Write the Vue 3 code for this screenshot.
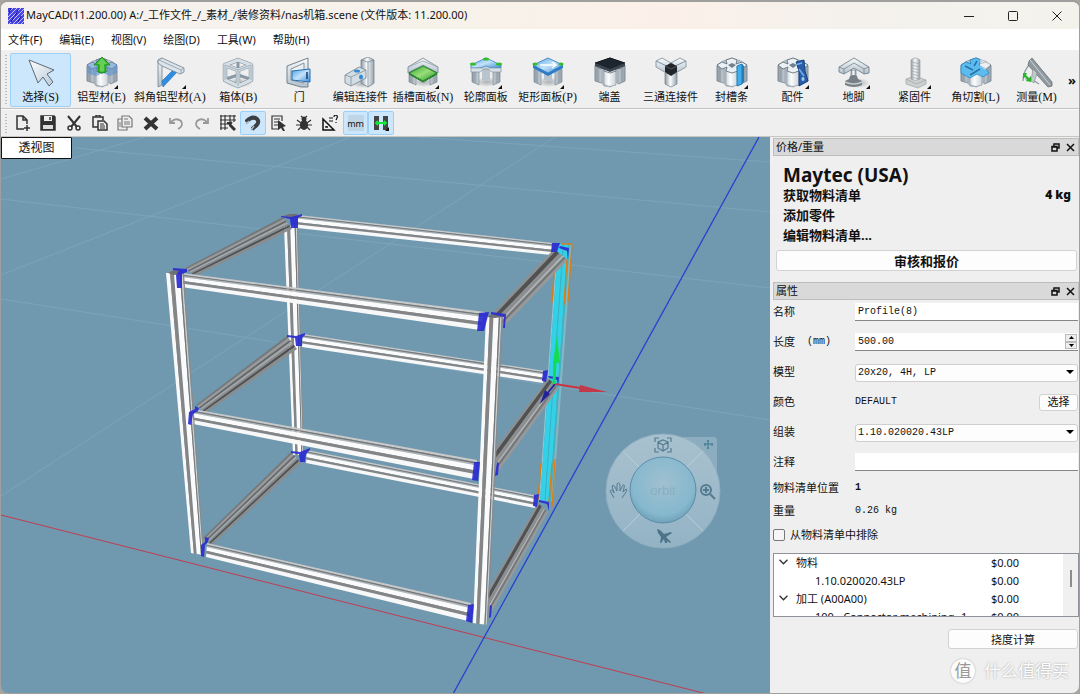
<script setup>
import { ref } from 'vue'

const menus = ['文件(F)', '编辑(E)', '视图(V)', '绘图(D)', '工具(W)', '帮助(H)']

const tools = [
  { id: 'select', zh: '选择', key: '(S)', active: true },
  { id: 'profile', zh: '铝型材', key: '(E)', drop: true },
  { id: 'miter', zh: '斜角铝型材', key: '(A)', drop: true },
  { id: 'box', zh: '箱体', key: '(B)' },
  { id: 'door', zh: '门' },
  { id: 'connector', zh: '编辑连接件' },
  { id: 'slotPanel', zh: '插槽面板', key: '(N)', drop: true },
  { id: 'outlinePanel', zh: '轮廓面板', drop: true },
  { id: 'rectPanel', zh: '矩形面板', key: '(P)', drop: true },
  { id: 'cap', zh: '端盖' },
  { id: 'threeWay', zh: '三通连接件' },
  { id: 'strip', zh: '封槽条', drop: true },
  { id: 'parts', zh: '配件', drop: true },
  { id: 'foot', zh: '地脚', drop: true },
  { id: 'fastener', zh: '紧固件', drop: true },
  { id: 'cut', zh: '角切割', key: '(L)' },
  { id: 'measure', zh: '测量', key: '(M)' },
]

const actions = [
  { id: 'new', label: '新建' },
  { id: 'save', label: '保存' },
  { id: 'cutout', label: '剪切' },
  { id: 'paste', label: '粘贴' },
  { id: 'copy', label: '复制' },
  { id: 'delete', label: '删除' },
  { id: 'undo', label: '撤销' },
  { id: 'redo', label: '重做' },
  { id: 'grid', label: '网格' },
  { id: 'snap', label: '吸附', active: true },
  { id: 'list', label: '清单' },
  { id: 'bug', label: '调试' },
  { id: 'angle', label: '角度' },
  { id: 'mm', label: '单位', active: true },
  { id: 'gap', label: '间距', active: true },
]

const name = ref('Profile(8)')
const length = ref('500.00')
const model = ref('20x20, 4H, LP')
const assembly = ref('1.10.020020.43LP')
const note = ref('')
const excluded = ref(false)

const tree = [
  { text: '物料', price: '$0.00', parent: true },
  { text: '1.10.020020.43LP', price: '$0.00' },
  { text: '加工 (A00A00)', price: '$0.00', parent: true },
  { text: '100 - Connector machining', qty: '1', price: '$0.00' },
]

const light = [
  [0, 0.12, '#c9c9c9'], [0.12, 0.2, '#777'], [0.2, 0.28, '#b5b5b5'],
  [0.28, 0.56, '#fbfbfb'], [0.56, 0.74, '#858585'], [0.74, 1, '#f8f8f8'],
]
const post = [
  [0, 0.22, '#f9f9f9'], [0.22, 0.44, '#858585'], [0.44, 0.76, '#fbfbfb'],
  [0.76, 0.84, '#777'], [0.84, 0.92, '#d0d0d0'], [0.92, 1, '#8b8b8b'],
]
const dark = [
  [0, 0.14, '#777'], [0.14, 0.3, '#9a9a9a'], [0.3, 0.42, '#666'], [0.42, 0.56, '#a6a6a6'],
  [0.56, 0.68, '#8a8a8a'], [0.68, 0.82, '#505050'], [0.82, 1, '#8c8c8c'],
]
const dark2 = [
  [0, 0.14, '#8f8f8f'], [0.14, 0.38, '#515151'], [0.38, 0.6, '#8e8e8e'],
  [0.6, 0.7, '#b5b5b5'], [0.7, 0.84, '#777'], [0.84, 1, '#999'],
]
const cyan = [
  [0, 0.08, '#8fc9d6'], [0.08, 0.4, '#32d1e8'], [0.4, 0.46, '#2bb9d0'], [0.46, 0.74, '#32d1e8'],
  [0.74, 0.86, '#3fb4c8'], [0.86, 1, '#7fb9c2'],
]

function stripes([x1, y1, x2, y2, x3, y3, x4, y4], set) {
  const mix = (a, b, t) => (a + (b - a) * t).toFixed(1)
  return set.map(([s, e, fill]) => ({
    fill,
    points: [
      [mix(x1, x2, s), mix(y1, y2, s)], [mix(x3, x4, s), mix(y3, y4, s)],
      [mix(x3, x4, e), mix(y3, y4, e)], [mix(x1, x2, e), mix(y1, y2, e)],
    ].join(' '),
  }))
}

const beams = [
  { at: [284, 226, 298, 225, 293, 455, 304, 455], set: post },
  { at: [298, 215, 297, 228, 553, 243, 551, 255], set: light },
  { at: [303, 334, 302, 347, 545, 371, 543, 383], set: light },
  { at: [307, 450, 306, 463, 538, 496, 535, 508], set: light },
  { at: [557, 244, 572, 244, 539, 500, 553, 502], set: cyan },
  { at: [283, 217, 292, 229, 185, 268, 195, 276], set: dark },
  { at: [287, 336, 297, 349, 196, 405, 206, 413], set: dark },
  { at: [291, 452, 301, 463, 203, 538, 212, 545], set: dark },
  { at: [554, 249, 568, 260, 494, 312, 504, 326], set: dark2 },
  { at: [548, 378, 559, 388, 495, 449, 497, 473], set: dark2 },
  { at: [538, 503, 548, 512, 487, 592, 491, 613], set: dark2 },
  { at: [182, 273, 181, 287, 485, 312, 480, 330], set: light },
  { at: [193, 409, 193, 424, 477, 460, 474, 479], set: light },
  { at: [207, 543, 206, 557, 471, 603, 468, 621], set: light },
  { at: [166, 273, 184, 273, 191, 553, 204, 555], set: post },
  { at: [486, 316, 503, 316, 473, 623, 488, 625], set: post },
].flatMap((b) => stripes(b.at, b.set))

const caps = [
  '283,216 289,214 297,214 297,217 290,218',
  '168,273 174,270 182,271 182,274 174,275',
  '487,317 493,313 503,314 502,317 495,318',
]

const corners = [
  '281,216 291,217 302,214 302,216 298,218 298,228 291,228 290,219 281,217',
  '173,268 187,269 187,272 182,274 182,288 177,288 176,275 179,271 173,270',
  '479,313 489,312 484,331 477,331',
  '491,312 506,314 505,328 503,328 504,317 491,314',
  '552,243 560,243 557,252 551,252',
  '560,246 569,248 568,260 567,251 559,248',
  '287,335 296,336 305,333 305,335 302,338 302,346 296,346 295,338 287,337',
  '195,406 199,408 198,411 193,414 191,425 188,424 189,412 195,409',
  '543,371 548,370 546,382 542,381',
  '548,376 559,377 558,387 557,380 549,378',
  '291,451 300,452 310,448 310,450 306,454 305,462 300,462 299,454 291,453',
  '205,537 209,538 208,542 205,545 204,557 201,556 201,545 205,542',
  '474,462 480,462 478,481 472,480',
  '497,462 499,463 498,475 495,476',
  '534,495 539,494 537,507 533,506',
  '539,500 549,502 549,511 547,504 539,502',
  '468,605 474,604 472,623 466,621',
  '490,605 492,606 491,617 489,618',
]

const gridLines = [
  [145, 137, 1, 179], [351, 137, 1, 275], [555, 137, 1, 496], [75, 148, 770, 212],
  [418, 137, 770, 162], [1, 199, 770, 288], [1, 299, 770, 420],
]
</script>

<template>
  <main class="window">
    <header class="titlebar">
      <svg class="logo" viewBox="0 0 16 16" aria-hidden="true">
        <rect width="16" height="16" fill="#4746e4" />
        <path d="M0 5 5 0M0 9 9 0M0 13 13 0M1 16 16 1M5 16 16 5M9 16 16 9M13 16 16 13" stroke="#c3c2fc" stroke-width="1" />
        <path d="M3 0 1 5M10 2 7 8M13 8 10 14M6 9 3 14" stroke="#1412a8" stroke-width="1" />
      </svg>
      <h1>MayCAD(11.200.00) A:/_工作文件_/_素材_/装修资料/nas机箱.scene (文件版本: 11.200.00)</h1>
      <div class="controls">
        <button aria-label="最小化"><svg viewBox="0 0 10 10"><path d="M0 5.5h10" /></svg></button>
        <button aria-label="最大化"><svg viewBox="0 0 10 10"><rect x=".5" y=".5" width="9" height="9" rx="1" /></svg></button>
        <button aria-label="关闭"><svg viewBox="0 0 10 10"><path d="M.5.5l9 9M9.500.5l-9 9" /></svg></button>
      </div>
    </header>

    <nav class="menu">
      <button v-for="m in menus" :key="m">{{ m }}</button>
    </nav>

    <svg class="defs" aria-hidden="true">
      <defs>
        <linearGradient id="steel"><stop offset="0" stop-color="#8d99a3" /><stop offset=".45" stop-color="#fafcfd" /><stop offset="1" stop-color="#94a0aa" /></linearGradient>
        <linearGradient id="pale" x2="0" y2="1"><stop offset="0" stop-color="#f7fafc" /><stop offset="1" stop-color="#b4c1cb" /></linearGradient>
        <linearGradient id="sky" x2="1" y2="1"><stop offset="0" stop-color="#4f9ee0" /><stop offset=".5" stop-color="#c2e2fa" /><stop offset="1" stop-color="#3c8cd6" /></linearGradient>
        <linearGradient id="leaf" x2="1" y2="1"><stop offset="0" stop-color="#2fa32c" /><stop offset=".5" stop-color="#9ade7c" /><stop offset="1" stop-color="#1e9120" /></linearGradient>
        <linearGradient id="cursor" x2="1" y2="1"><stop offset="0" stop-color="#fff" /><stop offset="1" stop-color="#b9c9d8" /></linearGradient>
        <radialGradient id="shade"><stop offset="0" stop-color="#7d8790" stop-opacity=".6" /><stop offset="1" stop-color="#7d8790" stop-opacity="0" /></radialGradient>
        <g id="legs">
          <ellipse cx="17" cy="25" rx="13" ry="5" fill="url(#shade)" />
          <path d="M12 12h8v11h-8z" fill="#b9c4cd" />
          <path d="M2 12h7v16l-7-3zM23 12h7v13l-7 3z" fill="url(#steel)" stroke="#7d8c98" stroke-width=".7" />
          <path d="M5 14V26M27 14V26" stroke="#8b98a3" stroke-width=".7" />
        </g>
        <g id="extrusion">
          <path d="M1 8 7 4 16 1 25 4 31 8V24L25 27 22 25 17 30 10 29 8 26 1 24z" fill="#b9c6cf" stroke="#8996a1" stroke-width=".6" />
          <path d="M1 9 8 11V26L1 24zM24 11 31 9V24L24 27zM10 13q6 3 12 0V28q-6 3-12 0z" fill="url(#steel)" stroke="#7d8c98" stroke-width=".6" />
          <path d="M4 10V25M28 10V25" stroke="#7d8c98" stroke-width=".6" />
          <path d="M1 8 6 5 11 7 10 3 16 1 21 3 20 7 26 5 31 8 26 12 21 10 22 14 16 16 10 14 11 10 6 12z" fill="#eaf0f3" stroke="#596975" stroke-width=".8" />
          <path d="M12 8 16 6 20 8 16 11z" fill="#71808c" />
        </g>
      </defs>
    </svg>

    <div class="toolbar" role="toolbar" aria-label="绘图工具">
      <span class="grip"></span>
      <button v-for="t in tools" :key="t.id" class="tool" :class="{ active: t.active }">
        <svg viewBox="0 0 32 32" aria-hidden="true">
          <path v-if="t.id === 'select'" d="M4 3 29 13 22 17 28 25 24 29 18 20 13 26z" fill="url(#cursor)" stroke="#5d6a76" stroke-width="1" />
          <g v-else-if="t.id === 'profile'">
            <use href="#extrusion" />
            <path d="M1 8 6 5 11 7 10 3 16 1 21 3 20 7 26 5 31 8 31 16 24 19 17 16 10 19 1 16z" fill="#5b93cf" opacity=".6" />
            <path d="M16 0 24 8H20V15Q16 17 12 15V8H8z" fill="#35b62c" stroke="#168517" stroke-width=".8" />
            <path d="M16 1 21 7H18V14Q16 15 14 14V7H11z" fill="#7fd968" opacity=".7" />
          </g>
          <g v-else-if="t.id === 'miter'">
            <path d="M4 3 8 1V28L4 30z" fill="url(#pale)" stroke="#738390" stroke-width=".8" />
            <path d="M8 24 21 11 24 14 9 30z" fill="#2f8ee0" stroke="#2069b0" stroke-width=".6" />
            <path d="M4 3 8 1 30 11V15L26 17 8 9 4 6z" fill="#dbe4ea" stroke="#738390" stroke-width=".8" />
            <path d="M5 3 27 13 30 11M27 13V17" fill="none" stroke="#8b99a4" stroke-width=".8" />
          </g>
          <g v-else-if="t.id === 'box'" fill="none" stroke-linejoin="round">
            <ellipse cx="17" cy="26" rx="14" ry="5" fill="url(#shade)" />
            <path d="M16 4V18M4 22 16 18 28 22" stroke="#8999a5" stroke-width="3" />
            <path d="M3 8 16 3 29 8 16 13zM3 8V23L16 29 29 23V8M16 13V29" stroke="#84949f" stroke-width="4.500" />
            <path d="M3 8 16 3 29 8 16 13zM3 8V23L16 29 29 23V8M16 13V29" stroke="#d5dfe5" stroke-width="3.200" />
            <path d="M3 8 16 13 29 8M16 13V29M3 8V23M29 8V23" stroke="#97a6b0" stroke-width=".8" />
          </g>
          <g v-else-if="t.id === 'door'">
            <path d="M4 9 25 1V30H18L4 26z" fill="url(#pale)" stroke="#738390" />
            <path d="M8 12 21 6V26L8 23z" fill="#e9f1f5" stroke="#8493a0" />
            <path d="M9 14 27 12V25L9 23z" fill="url(#sky)" stroke="#276fb0" />
            <path d="M24 15v7" stroke="#173b66" stroke-width="1.500" />
          </g>
          <g v-else-if="t.id === 'connector'">
            <ellipse cx="19" cy="27" rx="12" ry="4" fill="url(#shade)" />
            <path d="M17 3 24 0 30 3V26L24 30 17 26z" fill="url(#steel)" stroke="#76858f" stroke-width=".8" />
            <path d="M17 3 24 5 30 3M24 5V30" fill="none" stroke="#76858f" stroke-width=".7" />
            <path d="M1 18 15 10 22 13V21L7 29 1 26z" fill="#d3dde4" stroke="#71818d" stroke-width=".8" />
            <path d="M1 18 7 20 22 13M7 20V29" fill="none" stroke="#8493a0" stroke-width=".8" />
            <ellipse cx="13" cy="14" rx="3" ry="1.500" fill="#338bd8" /><ellipse cx="17" cy="20" rx="2" ry="2.600" fill="#338bd8" />
          </g>
          <g v-else-if="t.id === 'slotPanel'">
            <use href="#legs" />
            <path d="M1 10 16 1 31 10V16L16 8 1 16z" fill="url(#pale)" stroke="#738390" stroke-width=".8" />
            <path d="M1 10 16 4 31 10" fill="none" stroke="#8d9ba6" stroke-width=".7" />
            <path d="M2 16 16 9 30 16 16 24z" fill="url(#leaf)" stroke="#19851a" />
            <path d="M2 17 16 25 30 17" fill="none" stroke="#157417" />
          </g>
          <g v-else-if="t.id === 'outlinePanel'">
            <use href="#legs" />
            <path d="M1 8 16 1 31 8V11H22L16 9 10 11H1z" fill="url(#sky)" stroke="#3b88c4" stroke-width=".8" />
            <path d="M1 11H31V15H22Q16 9 10 15H1z" fill="#d7e1e8" stroke="#8796a2" stroke-width=".7" />
            <g fill="#35bd25"><ellipse cx="16" cy="2" rx="3" ry="1.500" /><ellipse cx="3" cy="7" rx="3" ry="1.500" /><ellipse cx="29" cy="7" rx="3" ry="1.500" /></g>
          </g>
          <g v-else-if="t.id === 'rectPanel'">
            <use href="#legs" />
            <path d="M1 8 16 1 31 8 16 16z" fill="url(#sky)" stroke="#2e78bb" stroke-width=".8" />
            <path d="M1 8V11L16 19 31 11V8L16 16z" fill="#2c7cc8" />
            <path d="M8 8H23M20 5 24 8 20 11" fill="none" stroke="#fff" stroke-width="1.500" />
            <g fill="#35bd25"><ellipse cx="3" cy="7" rx="2.600" ry="1.500" /><ellipse cx="29" cy="7" rx="2.600" ry="1.500" /></g>
          </g>
          <g v-else-if="t.id === 'cap'">
            <use href="#extrusion" />
            <path d="M1 6 16 1 31 6 16 12z" fill="#1d262f" stroke="#10161d" /><path d="M1 6V9L16 15 31 9V6L16 12z" fill="#39444e" />
          </g>
          <g v-else-if="t.id === 'threeWay'">
            <path d="M1 4 7 1 18 7V15L13 17 1 10zM31 4 25 1 14 7V15L19 17 31 10z" fill="url(#pale)" stroke="#7b8b97" stroke-width=".8" />
            <path d="M1 4 14 10M31 4 18 10" stroke="#8493a0" />
            <path d="M10 16H22V27L16 30 10 27z" fill="url(#steel)" stroke="#7b8b97" stroke-width=".8" />
            <path d="M10 9 16 6 22 9V15L16 19 10 15z" fill="#20252a" /><path d="M10 9 16 12 22 9" fill="none" stroke="#515961" />
          </g>
          <g v-else-if="t.id === 'strip'">
            <use href="#extrusion" />
            <path d="M21 9 26 7V27L21 29z" fill="#45aee9" stroke="#187ab5" /><path d="M26 7 28 9V25L26 27z" fill="#1d7fbd" />
          </g>
          <g v-else-if="t.id === 'parts'">
            <use href="#extrusion" />
            <path d="M19 5 27 3 28 14 31 24 22 29 22 14z" fill="#285fa9" stroke="#173f81" /><path d="M18 8 25 6M22 12 27 19" stroke="#79ace5" stroke-width="1.500" /><ellipse cx="26" cy="22" rx="1.500" ry="2" fill="#a9c9ec" />
          </g>
          <g v-else-if="t.id === 'foot'">
            <ellipse cx="20" cy="26" rx="12" ry="5" fill="url(#shade)" />
            <path d="M13 13H18V22H13z" fill="url(#steel)" stroke="#5e6972" stroke-width=".6" />
            <path d="M1 10 16 1 31 10V16L26 17 16 11 6 17 1 15z" fill="url(#pale)" stroke="#687985" stroke-width=".8" />
            <path d="M1 10 6 12 16 6 26 12 31 10M6 12V17M26 12V17" fill="none" stroke="#768692" stroke-width=".8" />
            <path d="M12 19Q16 17 19 19L20 22 24 24V28Q16 32 7 28V24L11 22z" fill="#788087" /><path d="M7 25Q16 29 24 25" fill="none" stroke="#c6cdd1" stroke-width="1.500" />
          </g>
          <g v-else-if="t.id === 'fastener'" stroke="#a0a5a7" stroke-width=".7">
            <path d="M7 22 16 19 27 23V27L19 31 7 27z" fill="#cbd0d1" /><path d="M7 22 17 27 27 23" fill="none" />
            <path d="M12 3Q16-1 21 3V22Q16 25 12 22z" fill="url(#steel)" /><path d="M12 5 21 7M12 8 21 10M12 11 21 13M12 14 21 16M12 17 21 19M12 20 21 22" />
          </g>
          <g v-else-if="t.id === 'cut'">
            <use href="#extrusion" />
            <path d="M1 8 6 5 11 7 10 3 16 1 21 3 19 8 26 12 29 16 23 20 17 17 10 21 1 16z" fill="#5ebbf0" stroke="#278bc6" stroke-width=".8" />
            <path d="M5 9 13 13M20 12 10 18M17 4 14 9" stroke="#2474aa" stroke-width="1.500" /><path d="M20 2 31 7 25 13 20 9z" fill="#efefef" opacity=".6" />
          </g>
          <g v-else>
            <path d="M9 7Q2 14 2 24M4 22Q9 20 18 27" fill="none" stroke="#90999f" stroke-width="1.200" />
            <path d="M8 4 11 1 31 25V29L27 30 7 8z" fill="#90999f" stroke="#667076" stroke-width=".8" /><path d="M9 3 29 28" stroke="#ccd3d7" /><path d="M12 12 16 16 13 26 10 24z" fill="#c1c9cd" stroke="#7b858a" stroke-width=".6" />
            <path d="M2 16V22L4 20 6 22 5 24 10 25V19L8 21 5 18 6 16z" fill="#26b62b" />
          </g>
          <path v-if="t.drop" d="M32 28V32H28z" fill="#111" />
        </svg>
        <span class="caption">{{ t.zh }}<span v-if="t.key" class="key">{{ t.key }}</span></span>
      </button>
      <button class="more" aria-label="更多">»</button>
    </div>

    <div class="actions" role="toolbar" aria-label="编辑工具">
      <span class="grip"></span>
      <div class="action-grid">
        <button v-for="a in actions" :key="a.id" :aria-label="a.label" :class="{ active: a.active }">
          <svg viewBox="0 0 16 16" fill="none" stroke="#333" stroke-width="1.500" aria-hidden="true">
            <path v-if="a.id === 'new'" d="M9 14H2V1H8L12 5V9M8 1V5H12M12 10V16M9 13H15" />
            <g v-else-if="a.id === 'save'"><path d="M1 1H14L15 2V15H1z" fill="#333" /><path d="M4 1H12V6H4z" fill="#eee" stroke="none" /><path d="M3 10H13V14H3z" fill="#ddd" stroke="none" /><path d="M10 2V5" /></g>
            <g v-else-if="a.id === 'cutout'"><path d="M2 1 11 12M14 1 5 12" stroke-width="2" /><circle cx="4" cy="13" r="2" /><circle cx="12" cy="13" r="2" /></g>
            <g v-else-if="a.id === 'paste'"><path d="M6 12H1V2H11V5M4 2V0H8V2" /><path d="M6 6H12L15 9V15H6z" fill="#eee" /><path d="M8 9H12M8 11H13M8 13H13" stroke-width="1" /></g>
            <g v-else-if="a.id === 'copy'" stroke="#777"><path d="M5 4H1V15H10V12" stroke-width="1.200" /><path d="M5 1H12L15 4V12H5z" fill="#eee" stroke-width="1.200" /><path d="M7 4H11M7 7H13M7 9H13M3 7V12" stroke-width="1" /></g>
            <path v-else-if="a.id === 'delete'" d="M2 3 14 14M14 3 2 14" stroke-width="4" />
            <path v-else-if="a.id === 'undo'" d="M2 3V8H7M3 7Q8 2 13 6 16 11 10 14" stroke="#999" stroke-width="1.800" />
            <path v-else-if="a.id === 'redo'" d="M14 3V8H9M13 7Q8 2 3 6 0 11 6 14" stroke="#999" stroke-width="1.800" />
            <g v-else-if="a.id === 'grid'"><path d="M0 1H16M0 5H16M0 9H9M0 13H8M1 0V15M5 0V15M10 0V7M14 0V7" stroke-width="1.200" /><path d="M10 10 15 15" stroke-width="3" /><path d="M7 8H10V11M12 7 9 10" stroke-width="2" /></g>
            <g v-else-if="a.id === 'snap'"><path d="M1 7Q7 0 12 4 16 8 7 14" stroke="#3b3f43" stroke-width="4" /><path d="M1 9 4 6M6 15 9 11" stroke="#a9b4bd" /></g>
            <g v-else-if="a.id === 'list'"><path d="M8 14H1V1H11V6M3 4H9M3 7H7M3 10H7" stroke-width="1.200" /><path d="M7 5 15 11 12 12 14 16 12 16 10 13 7 15z" fill="#333" stroke="none" /></g>
            <g v-else-if="a.id === 'bug'"><ellipse cx="8" cy="10" rx="4" ry="5" fill="#333" stroke="none" /><circle cx="8" cy="4" r="2.500" fill="#333" stroke="none" /><path d="M5 1 7 3M11 1 9 3M1 5 5 8M15 5 11 8M0 10H16M2 15 5 12M14 15 11 12" stroke-width="1.200" /></g>
            <g v-else-if="a.id === 'angle'" stroke="#111"><path d="M1 4V15H12zM4 11V12H6" /><path d="M7 3H11M7 6H11M12 2Q12 0 14 0 16 1 15 3L14 5M14 7V8" stroke-width="1.200" /></g>
            <rect v-else-if="a.id === 'mm'" width="16" height="16" fill="#bed5e5" stroke="none" />
            <g v-else><path d="M1 1H6V15H1zM10 1H15V15H10z" fill="#444" stroke="none" /><path d="M3 8H13M5 6 3 8 5 10M11 6 13 8 11 10" stroke="#12e83a" stroke-width="1.800" /><path d="M16 12V16H12z" fill="#111" stroke="none" /></g>
          </svg>
          <span v-if="a.id === 'mm'" class="unit">mm</span>
        </button>
      </div>
    </div>

    <div class="workspace">
      <section class="viewport">
        <svg class="scene" viewBox="1 137 769 556" preserveAspectRatio="xMinYMin slice" role="img" aria-label="透视图">
          <defs>
            <linearGradient id="ring" x2="0" y2="1"><stop offset="0" stop-color="#a9c1cf" /><stop offset="1" stop-color="#93b3c5" /></linearGradient>
            <radialGradient id="ball" cx=".5" cy=".4" r=".62"><stop offset="0" stop-color="#a0c0d0" /><stop offset=".75" stop-color="#86b8ce" /><stop offset="1" stop-color="#6c9fb7" /></radialGradient>
          </defs>
          <rect x="1" y="137" width="769" height="556" fill="#7099b0" />
          <line v-for="(l, i) in gridLines" :key="'g' + i" :x1="l[0]" :y1="l[1]" :x2="l[2]" :y2="l[3]" stroke="#7da3b9" stroke-width="1" />
          <path d="M1 515 707 694" stroke="#c23c50" />
          <path d="M453 694 759 137" stroke="#2840d0" stroke-width="1.300" />
          <polygon v-for="(b, i) in beams" :key="'b' + i" :points="b.points" :fill="b.fill" />
          <polygon v-for="(c, i) in caps" :key="'k' + i" :points="c" fill="#707074" />
          <path d="M554 273 552 303M567 260 564 305M572 244 568 302M562 244H572M541 463 538 500M552 463 549 502M555 459 552 507" fill="none" stroke="#d97d18" stroke-width="1.300" />
          <polygon v-for="(c, i) in corners" :key="'c' + i" :points="c" fill="#2a2bd0" fill-opacity=".92" />
          <path d="M555 384 547 394" stroke="#22229c" stroke-width="2" /><path d="M545 390 550 394 540 404z" fill="#22229c" />
          <path d="M555 384 580 388" stroke="#cc3442" stroke-width="2" /><path d="M580 385 607 392 579 392z" fill="#c23a48" />
          <path d="M554 384 555 362" stroke="#14d957" stroke-width="3" /><path d="M557 335 560 363H553z" fill="#14dc55" />

          <path d="M663 437H714Q717 437 717 440V490H663z" fill="#8cadbf" />
          <circle cx="663" cy="491" r="57" fill="url(#ring)" stroke="#8fafc1" />
          <path d="M623 451 640 468M703 451 686 468M623 531 640 514M703 531 686 514" stroke="#b9cdd8" />
          <circle cx="663" cy="490" r="33" fill="url(#ball)" stroke="#5c8da6" stroke-width="1" />
          <text x="663" y="495" text-anchor="middle" font-family="Liberation Sans, sans-serif" font-size="13" fill="#88afc3">orbit</text>
          <g fill="none" stroke="#557b90" stroke-width="1.200">
            <path d="M655 442V438H659M667 438H671V442M671 448V452H667M659 452H655V448" />
            <path d="M663 440 668 442V448L663 451 658 448V442zM658 442 663 445 668 442M663 445V451" />
            <circle cx="706" cy="490" r="5" stroke-width="2" /><path d="M703 490H709M706 487V493M710 494 715 499" stroke-width="2" />
            <path d="M614 498 610 491Q611 489 613 491L614 493 612 486Q614 484 615 487L617 491V484Q619 481 620 485V491L623 485Q625 484 624 488L623 492 626 489Q628 489 626 492L622 498" stroke-width="1" />
            <path d="M708 440V449M704 444H713M707 441H709M707 448H709M705 443V446M712 443V446" stroke="#39798f" stroke-width="1" />
          </g>
          <path d="M657 529 660 530 664 534 671 532 672 533 666 537 671 542 670 543 667 541 667 543 665 543 664 539 661 543 660 543 661 537 658 533z" fill="#4d7389" />
        </svg>
        <button class="view-name">透视图</button>
      </section>

      <aside class="dock">
        <section class="panel">
          <header class="panel-title">
            <h2>价格/重量</h2>
            <button aria-label="浮动"><svg viewBox="0 0 9 9"><path d="M3 3V1H8V5H6M1 3.500H6V8H1zM1 4H6" /></svg></button>
            <button aria-label="关闭"><svg viewBox="0 0 9 9"><path d="M1 1 8 8M8 1 1 8" /></svg></button>
          </header>
          <div class="pricing">
            <h3>Maytec (USA)</h3>
            <div class="first"><a href="#bom">获取物料清单</a><b class="total">4 kg</b></div>
            <a href="#add">添加零件</a>
            <a href="#edit">编辑物料清单...</a>
          </div>
          <button class="btn quote">审核和报价</button>
        </section>

        <section class="panel">
          <header class="panel-title">
            <h2>属性</h2>
            <button aria-label="浮动"><svg viewBox="0 0 9 9"><path d="M3 3V1H8V5H6M1 3.500H6V8H1zM1 4H6" /></svg></button>
            <button aria-label="关闭"><svg viewBox="0 0 9 9"><path d="M1 1 8 8M8 1 1 8" /></svg></button>
          </header>
          <form class="form" @submit.prevent>
            <div class="row"><label for="name">名称</label><input id="name" v-model="name" class="field" /></div>
            <div class="row">
              <label for="length" class="with-unit">长度<span class="mono">(mm)</span></label>
              <div class="field spin">
                <input id="length" v-model="length" />
                <span class="steps">
                  <button type="button" aria-label="增加"><svg viewBox="0 0 5 3"><path d="M0 3 2.500 0 5 3z" /></svg></button>
                  <button type="button" aria-label="减少"><svg viewBox="0 0 5 3"><path d="M0 0 2.500 3 5 0z" /></svg></button>
                </span>
              </div>
            </div>
            <div class="row">
              <label for="model">模型</label>
              <div class="combo"><select id="model" v-model="model"><option>20x20, 4H, LP</option></select><svg viewBox="0 0 8 4"><path d="M0 0H8L4 4z" /></svg></div>
            </div>
            <div class="row"><span>颜色</span><div class="split"><span class="mono">DEFAULT</span><button type="button" class="btn pick">选择</button></div></div>
            <div class="row">
              <label for="assembly">组装</label>
              <div class="combo"><select id="assembly" v-model="assembly"><option>1.10.020020.43LP</option></select><svg viewBox="0 0 8 4"><path d="M0 0H8L4 4z" /></svg></div>
            </div>
            <div class="row"><label for="note">注释</label><input id="note" v-model="note" class="field" /></div>
            <div class="row close"><span>物料清单位置</span><b class="mono">1</b></div>
            <div class="row tight"><span>重量</span><span class="mono">0.26 kg</span></div>
            <label class="check"><input v-model="excluded" type="checkbox" />从物料清单中排除</label>
          </form>

          <div class="tree">
            <table>
              <tbody>
                <tr v-for="r in tree" :key="r.text">
                  <td :class="{ child: !r.parent }">
                    <svg v-if="r.parent" viewBox="0 0 8 5"><path d="M.5.5 4 4 7.500.5" /></svg>{{ r.text }}
                  </td>
                  <td class="qty">{{ r.qty }}</td>
                  <td class="price">{{ r.price }}</td>
                </tr>
              </tbody>
            </table>
            <div class="scroll"><span></span></div>
          </div>
          <button class="btn calc">挠度计算</button>
        </section>

        <div class="brand"><span class="seal">值</span><span>什么值得买</span></div>
      </aside>
    </div>
  </main>
</template>

<style>
body { margin: 0; background: #aaa49c; }
</style>

<style scoped>
* { box-sizing: border-box; }
button, input, select { font: inherit; color: inherit; margin: 0; padding: 0; border: 0; background: none; }
h1, h2, h3 { margin: 0; font-weight: 400; }
a { color: inherit; text-decoration: none; }

.window {
  height: 100vh; display: flex; flex-direction: column; overflow: hidden;
  border: 1px solid #9f9f9d; border-top-width: 2px; border-radius: 8px; background: #efefef;
  font-family: "Noto Sans", "Noto Sans CJK SC", sans-serif; font-size: 11px; line-height: 16px; color: #111;
}
.mono { font-family: "Liberation Mono", "Noto Sans CJK SC", monospace; font-size: 10px; }
.defs { position: absolute; width: 0; height: 0; }

.titlebar {
  flex: none; height: 27px; display: flex; align-items: center; padding-left: 7px;
  background: linear-gradient(90deg, #f6f1ef, #f6f2ea 40%, #fbf0e9 62%, #f4f1ec 78%, #f3f3ec);
}
.logo { width: 16px; height: 16px; margin-right: 2px; }
.titlebar h1 { flex: 1; font-size: 11px; line-height: 16px; padding-bottom: 2px; white-space: nowrap; }
.controls { display: flex; }
.controls button { width: 44px; height: 26px; display: grid; place-items: center; }
.controls svg { width: 10px; height: 10px; fill: none; stroke: #222; }

.menu { flex: none; height: 22px; display: flex; background: #fff; border-bottom: 1px solid #f0f0f0; }
.menu button { padding: 0 10px 0 7px; }

.toolbar { flex: none; height: 58px; display: flex; align-items: center; padding-left: 4px; border-bottom: 1px solid #c3c3c3; }
.grip { flex: none; width: 2px; align-self: stretch; margin: 4px 3px 3px 0; background: repeating-linear-gradient(#bbb 0 1px, transparent 1px 3px); }
.tool {
  flex: none; min-width: 61px; height: 54px; padding: 3px 1px 0; display: flex; flex-direction: column; align-items: center;
  border: 1px solid transparent; border-radius: 2px;
}
.tool.active, .action-grid .active { background: #cce6fc; border-color: #9bd0fb; }
.tool svg { width: 32px; height: 32px; flex: none; }
.caption { white-space: nowrap; line-height: 16px; }
.key { font-family: "Liberation Serif", serif; font-size: 12px; }
.more { margin-left: auto; padding-right: 3px; font-size: 13px; font-weight: 700; }

.actions { flex: none; height: 28px; display: flex; align-items: center; padding-left: 4px; border-top: 1px solid #fafafa; border-bottom: 1px solid #c8c4c0; }
.action-grid { width: 384px; height: 24px; display: grid; grid-template-columns: repeat(15, 1fr); }
.action-grid button { position: relative; display: grid; place-items: center; border: 1px solid transparent; border-radius: 2px; }
.action-grid svg { width: 16px; height: 16px; }
.unit { position: absolute; inset: 0; line-height: 23px; font-size: 9px; text-align: center; }

.workspace { flex: 1; min-height: 0; display: flex; }
.viewport { flex: 1; min-width: 0; position: relative; background: #7099b0; }
.scene { display: block; width: 100%; height: 100%; }
.view-name { position: absolute; left: 0; top: 0; width: 71px; height: 22px; background: #fff; border: 1px solid #111; border-radius: 1px; font-size: 12px; }

.dock { flex: none; width: 309px; padding: 1px 0 0 3px; display: flex; flex-direction: column; }
.panel { display: flex; flex-direction: column; }
.panel-title { height: 18px; display: flex; align-items: center; gap: 6px; padding: 0 3px 0 2px; background: #d9d9d9; border: 1px solid #bdbdbd; }
.panel-title h2 { flex: 1; font-size: 11px; }
.panel-title button { width: 9px; height: 9px; display: flex; }
.panel-title svg { width: 9px; height: 9px; fill: none; stroke: #111; stroke-width: 1.500; }

.pricing { display: flex; flex-direction: column; padding: 10px 8px 0 10px; font-size: 13px; line-height: 20px; font-weight: 700; }
.pricing h3 { font-size: 19px; line-height: 19px; font-weight: 700; }
.first { display: flex; justify-content: space-between; }
.total { font-size: 12px; }
.btn { background: #fdfdfd; border: 1px solid #d2d2d2; border-radius: 3px; }
.quote { height: 21px; margin: 5px 2px 11px 3px; font-size: 13px; line-height: 18px; font-weight: 700; }

.form { display: flex; flex-direction: column; padding: 3px 1px 0 0; }
.row { height: 18px; margin-bottom: 12px; display: grid; grid-template-columns: 82px 1fr; align-items: center; white-space: nowrap; }
.row:nth-child(6) { margin-bottom: 8px; }
.row.close { margin-bottom: 5px; }
.row.tight { margin-bottom: 6px; }
.with-unit { display: flex; gap: 12px; }
.field { width: 100%; height: 18px; padding-left: 3px; background: #fff; border-bottom: 1px solid #868686; font-family: "Liberation Mono", monospace; font-size: 10px; outline: 0; }
.spin { display: flex; }
.spin input { flex: 1; min-width: 0; outline: 0; }
.steps { width: 14px; display: grid; grid-template-rows: 1fr 1fr; padding: 1px; }
.steps button { display: grid; place-items: center; background: #eee; border: 1px solid #bbb; }
.steps svg { width: 5px; height: 3px; }
.combo { position: relative; height: 18px; }
.combo select { width: 100%; height: 18px; padding-left: 2px; appearance: none; background: #fdfdfd; border: 1px solid #cfcfcf; border-radius: 3px; font-family: "Liberation Mono", monospace; font-size: 10px; }
.combo svg { position: absolute; right: 4px; top: 7px; width: 8px; height: 4px; }
.split { display: flex; justify-content: space-between; align-items: center; }
.pick { width: 39px; height: 17px; line-height: 14px; }
.check { height: 18px; display: flex; align-items: center; gap: 5px; }
.check input { appearance: none; width: 12px; height: 12px; border: 1px solid #777; border-radius: 2px; background: #f6f6f6; }
.check input:checked { background: #2a72c8; }

.tree { height: 64px; margin-top: 9px; display: flex; overflow: hidden; background: #fff; border: 1px solid #8d9299; }
.tree table { flex: 1; border-collapse: collapse; align-self: flex-start; }
.tree td { height: 18px; padding: 0; line-height: 18px; white-space: nowrap; }
.tree td:first-child { width: 187px; padding-left: 5px; }
.tree td.child { padding-left: 41px; }
.tree td svg { width: 9px; height: 6px; margin-right: 8px; fill: none; stroke: #333; stroke-width: 1.200; vertical-align: 2px; }
.tree .qty { width: 30px; }
.scroll { width: 15px; background: #f0f0f0; display: flex; justify-content: center; padding-top: 16px; }
.scroll span { width: 2px; height: 17px; background: #8c8c8c; }
.calc { align-self: flex-end; width: 130px; height: 20px; margin: 12px 1px 0 0; line-height: 17px; }

.brand { display: flex; align-items: center; justify-content: flex-end; gap: 9px; margin: 10px 10px 0 0; font-size: 17px; line-height: 24px; color: #fdfdfd; text-shadow: 0 0 2px #999; }
.seal { width: 24px; height: 24px; border-radius: 50%; background: #fcfcfc; color: #999; text-align: center; line-height: 23px; text-shadow: none; box-shadow: 0 0 2px #aaa; }
</style>
